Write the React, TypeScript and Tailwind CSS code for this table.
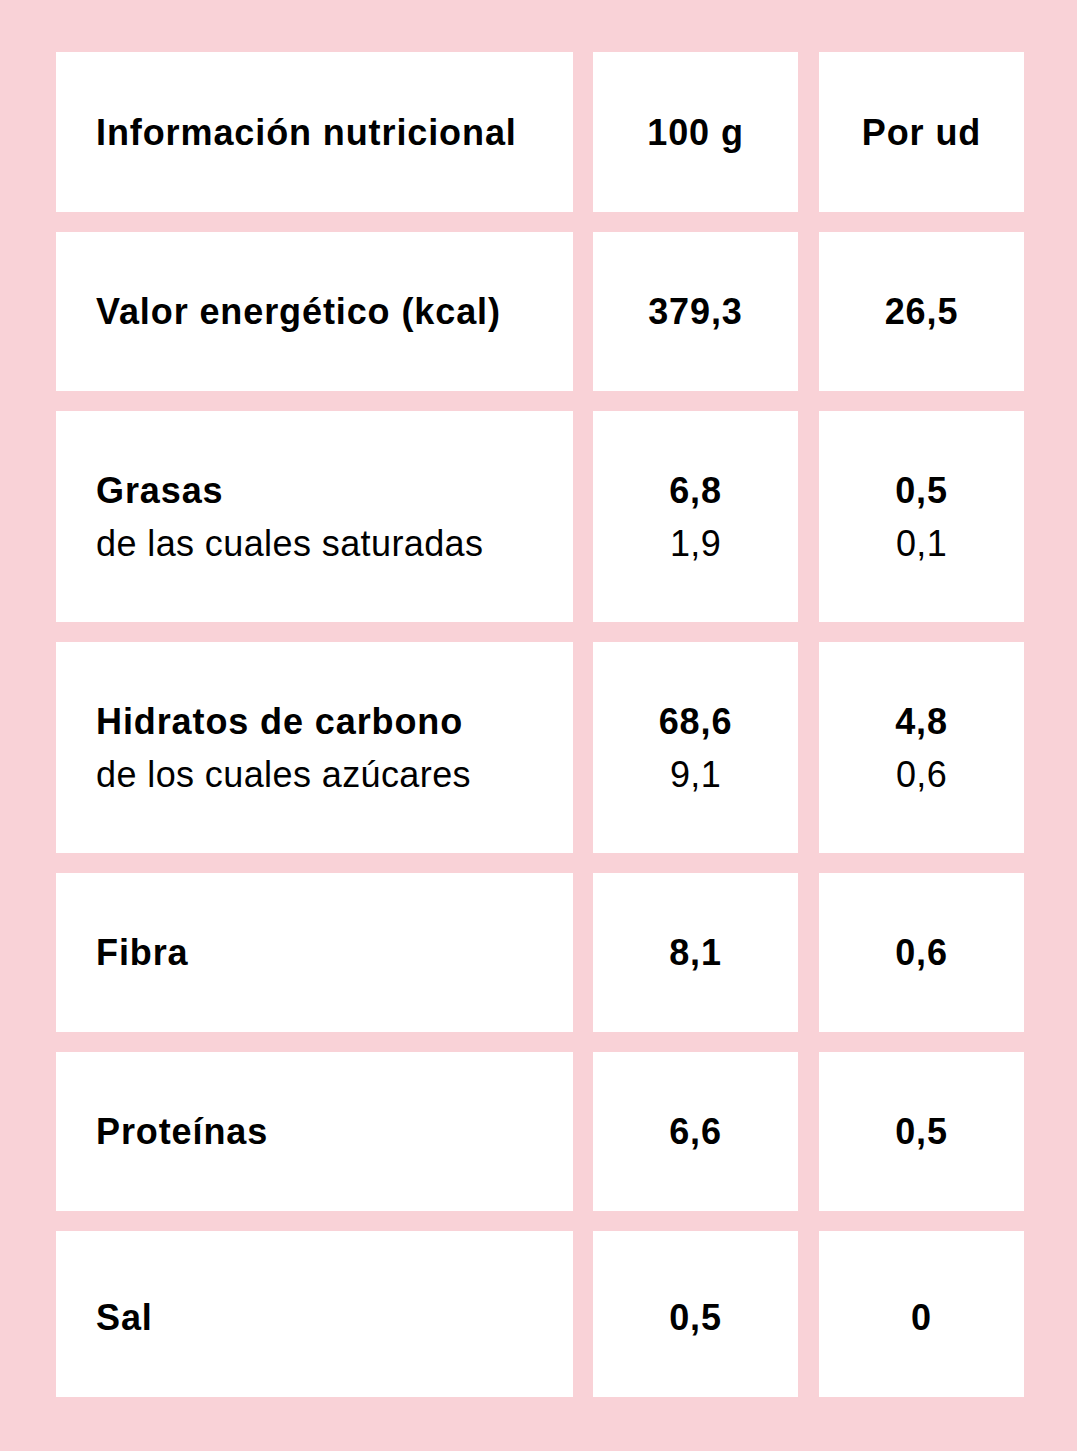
import React from 'react';

type Row = {
  label: string;
  sub?: string;
  a: string;
  b: string;
  subA?: string;
  subB?: string;
  h: string;
};

const rows: Row[] = [
  { label: 'Información nutricional', a: '100 g', b: 'Por ud', h: 'h-[160px]' },
  { label: 'Valor energético (kcal)', a: '379,3', b: '26,5', h: 'h-[159px]' },
  { label: 'Grasas', sub: 'de las cuales saturadas', a: '6,8', b: '0,5', subA: '1,9', subB: '0,1', h: 'h-[211px]' },
  { label: 'Hidratos de carbono', sub: 'de los cuales azúcares', a: '68,6', b: '4,8', subA: '9,1', subB: '0,6', h: 'h-[211px]' },
  { label: 'Fibra', a: '8,1', b: '0,6', h: 'h-[159px]' },
  { label: 'Proteínas', a: '6,6', b: '0,5', h: 'h-[159px]' },
  { label: 'Sal', a: '0,5', b: '0', h: 'h-[166px] pt-[6px]' },
];

const Cell = ({ main, sub, left, h }: { main: string; sub?: string; left?: boolean; h: string }) => (
  <div
    className={`bg-white flex flex-col justify-center ${h} ${left ? 'items-start pl-[40px]' : 'items-center'}`}
  >
    <span className="font-bold leading-[53px] tracking-[0.9px]">{main}</span>
    {sub && <span className="font-normal leading-[53px] tracking-[0.4px]">{sub}</span>}
  </div>
);

export default function App() {
  return (
    <div
      className="min-h-[1451px] w-[1077px] bg-[#f9d2d7] pt-[52px] pb-[54px] pl-[56px] text-[36px] text-black"
      style={{ fontFamily: '"Liberation Sans", Arial, sans-serif' }}
    >
      <div className="grid grid-cols-[517px_205px_206px] gap-x-[20px] gap-y-[20px] w-[968px] [&>*:nth-child(3n)]:ml-[1px]">
        {rows.map((r, i) => (
          <React.Fragment key={i}>
            <Cell main={r.label} sub={r.sub} left h={r.h} />
            <Cell main={r.a} sub={r.subA} h={r.h} />
            <Cell main={r.b} sub={r.subB} h={r.h} />
          </React.Fragment>
        ))}
      </div>
    </div>
  );
}
